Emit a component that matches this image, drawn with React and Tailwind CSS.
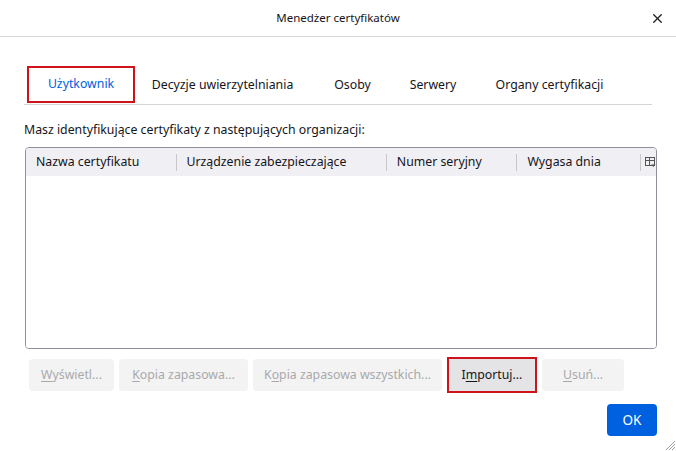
import { X } from 'lucide-react'

const tabs = [
    { label: 'Użytkownik', w: 'w-[108px]', selected: true },
    { label: 'Decyzje uwierzytelniania', w: 'w-[175px]' },
    { label: 'Osoby', w: 'w-[85px]' },
    { label: 'Serwery', w: 'w-[76px]' },
    { label: 'Organy certyfikacji', w: 'w-[157px]' },
]

const columns = [
    { label: 'Nazwa certyfikatu', w: 'w-[150px]' },
    { label: 'Urządzenie zabezpieczające', w: 'w-[211px]' },
    { label: 'Numer seryjny', w: 'w-[131px]' },
    { label: 'Wygasa dnia', w: 'w-[124px]' },
]

// Underlined access key inside a label
const Label = ({ before = '', keyChar, after }) => (
    <span>
        {before}
        <span className="underline underline-offset-2">{keyChar}</span>
        {after}
    </span>
)

const App = () => {
    return (
        <div
            className="w-[676px] h-[451px] bg-white flex flex-col text-[12.3px] text-[#15141a] relative overflow-hidden"
            style={{ fontFamily: '"Noto Sans", "Open Sans", sans-serif' }}
        >
            {/* Title bar */}
            <div className="h-[37px] flex items-center justify-center border-b border-[#d8d8d8] relative shrink-0">
                <span className="text-[11.5px]">Menedżer certyfikatów</span>
                <X size={15} strokeWidth={2.2} className="absolute right-[11px] top-[11px] text-[#222]" />
            </div>

            {/* Tabs */}
            <div className="ml-[24px] mr-[24px] mt-[29px] flex border-b border-[#d4d4d4] h-[39px]">
                <div className="w-[3px]" />
                {tabs.map(tab => (
                    <div
                        key={tab.label}
                        className={`${tab.w} flex items-center justify-center shrink-0 ${tab.selected
                            ? 'text-[#0061e0] border-2 border-[#d0121b] mb-[1px]'
                            : ''
                            }`}
                    >
                        {tab.label}
                    </div>
                ))}
            </div>

            {/* Description */}
            <p className="mx-[24px] mt-[16px] leading-[18px]">
                Masz identyfikujące certyfikaty z następujących organizacji:
            </p>

            {/* Certificate table */}
            <div className="ml-[25px] mr-[19px] mt-[8px] h-[202px] border border-[#8f8f9d] rounded-[4px] overflow-hidden flex flex-col">
                <div className="h-[28px] bg-[#f0f0f4] flex items-center shrink-0">
                    {columns.map((col, i) => (
                        <div key={col.label} className={`${col.w} h-full flex items-center`}>
                            {i > 0 && <div className="w-px h-[17px] bg-[#c8c8c8]" />}
                            <span className="pl-[10px]">{col.label}</span>
                        </div>
                    ))}
                    <div className="flex-1 h-full flex items-center">
                        <div className="w-px h-[17px] bg-[#c8c8c8]" />
                        <svg width="11" height="11" viewBox="0 0 11 11" className="ml-[4px]" fill="none" stroke="#555" strokeWidth="1">
                            <rect x="0.5" y="0.5" width="9" height="8" />
                            <line x1="0.5" y1="3.5" x2="9.5" y2="3.5" />
                            <line x1="4.5" y1="0.5" x2="4.5" y2="8.5" />
                            <path d="M6 7.5 L10.5 7.5 L8.25 10 Z" fill="#555" stroke="none" />
                        </svg>
                    </div>
                </div>
                <div className="flex-1 bg-white" />
            </div>

            {/* Action buttons */}
            <div className="mx-[29px] mt-[8px] flex items-center gap-[5px]">
                <button className="w-[85px] h-[32px] bg-[#f3f3f3] rounded-[4px] text-[#a9a9ab]">
                    <Label keyChar="W" after="yświetl..." />
                </button>
                <button className="w-[129px] h-[32px] bg-[#f3f3f3] rounded-[4px] text-[#a9a9ab]">
                    <Label keyChar="K" after="opia zapasowa..." />
                </button>
                <button className="w-[189px] h-[32px] bg-[#f3f3f3] rounded-[4px] text-[#a9a9ab]">
                    <Label before="K" keyChar="o" after="pia zapasowa wszystkich..." />
                </button>
                <div className="w-[90px] h-[36px] border-2 border-[#d0121b] flex items-center justify-center">
                    <button className="w-[86px] h-[32px] bg-[#e4e4e6] text-[#15141a]">
                        <Label before="I" keyChar="m" after="portuj..." />
                    </button>
                </div>
                <button className="w-[82px] h-[32px] bg-[#f3f3f3] rounded-[4px] text-[#a9a9ab]">
                    <Label keyChar="U" after="suń..." />
                </button>
            </div>

            {/* Footer */}
            <div className="mx-[19px] mt-[11px] flex justify-end">
                <button className="w-[50px] h-[32px] bg-[#0061e0] rounded-[4px] text-white text-[13.5px]">
                    OK
                </button>
            </div>

            {/* Resize grip */}
            <svg width="10" height="10" viewBox="0 0 10 10" className="absolute right-[1px] bottom-[1px]" stroke="#888" strokeWidth="0.8">
                <line x1="10" y1="1" x2="1" y2="10" />
                <line x1="10" y1="4" x2="4" y2="10" />
                <line x1="10" y1="7" x2="7" y2="10" />
            </svg>
        </div>
    )
}

export default App
